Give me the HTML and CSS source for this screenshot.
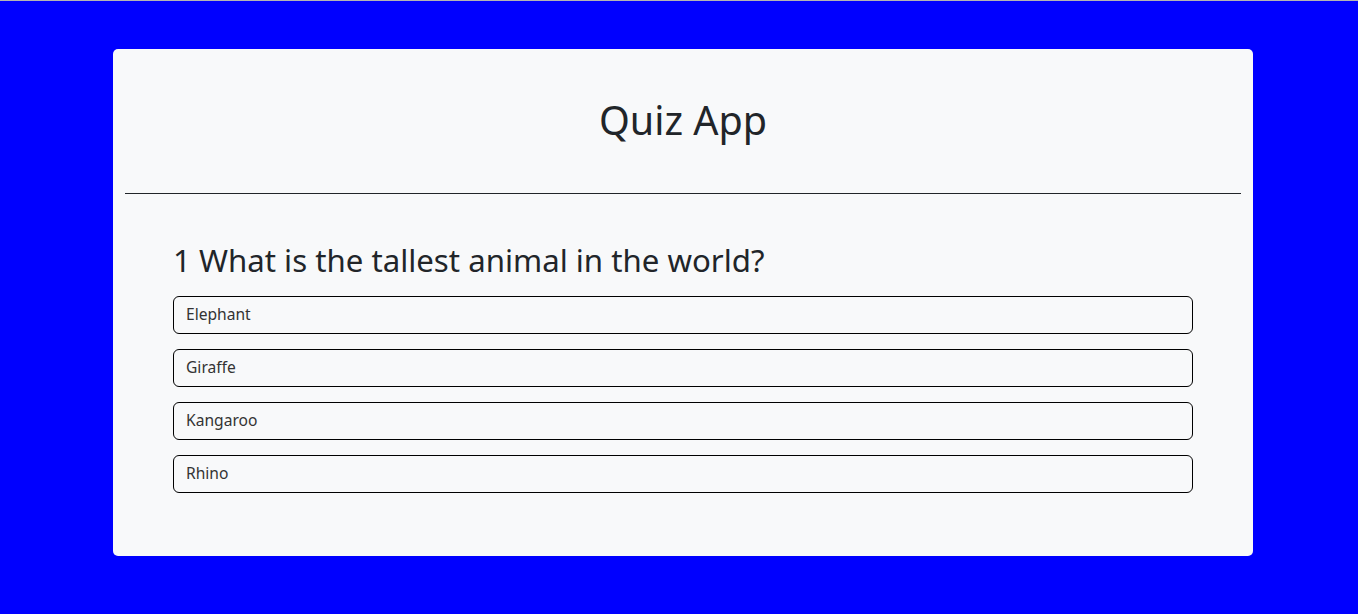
FILE: index.html
```html
<!DOCTYPE html>
<html lang="en">
<head>
<meta charset="utf-8">
<title>Quiz App</title>
<link rel="stylesheet" href="styles.css">
</head>
<body>
<main class="card">
  <header class="card-header">
    <h1 class="title">Quiz App</h1>
  </header>
  <section class="quiz">
    <h2 class="question">1 What is the tallest animal in the world?</h2>
    <ul class="options">
      <li class="option">Elephant</li>
      <li class="option">Giraffe</li>
      <li class="option">Kangaroo</li>
      <li class="option">Rhino</li>
    </ul>
  </section>
</main>
</body>
</html>
```

FILE: styles.css
```css
html, body {
  margin: 0;
  padding: 0;
}
body {
  background: #0000ff;
  border-top: 1px solid #b4b4b4;
  padding-left: 8px;
  min-height: 613px;
  box-sizing: border-box;
  font-family: "Noto Sans", "Open Sans", sans-serif;
  color: #212529;
}
.card {
  width: 1140px;
  margin: 48px auto 0;
  background: #f8f9fa;
  border-radius: 5px;
  padding: 0 12px;
  box-sizing: border-box;
}
.card-header {
  padding: 47px 0 49px;
  border-bottom: 1px solid #212529;
}
.title {
  margin: 0;
  text-align: center;
  font-size: 39.5px;
  font-weight: 400;
  line-height: 48px;
}
.quiz {
  padding: 47px 48px 48px;
}
.question {
  margin: 0 0 17px;
  font-size: 31.2px;
  font-weight: 400;
  line-height: 38px;
}
.options {
  list-style: none;
  margin: 0;
  padding: 0;
  display: flex;
  flex-direction: column;
  gap: 15px;
}
.option {
  height: 38px;
  box-sizing: border-box;
  border: 1px solid #000;
  border-radius: 6px;
  padding: 0 12px 2px;
  display: flex;
  align-items: center;
  font-size: 15.6px;
  color: #333;
}
.option:last-child {
  margin-bottom: 15px;
}
```
